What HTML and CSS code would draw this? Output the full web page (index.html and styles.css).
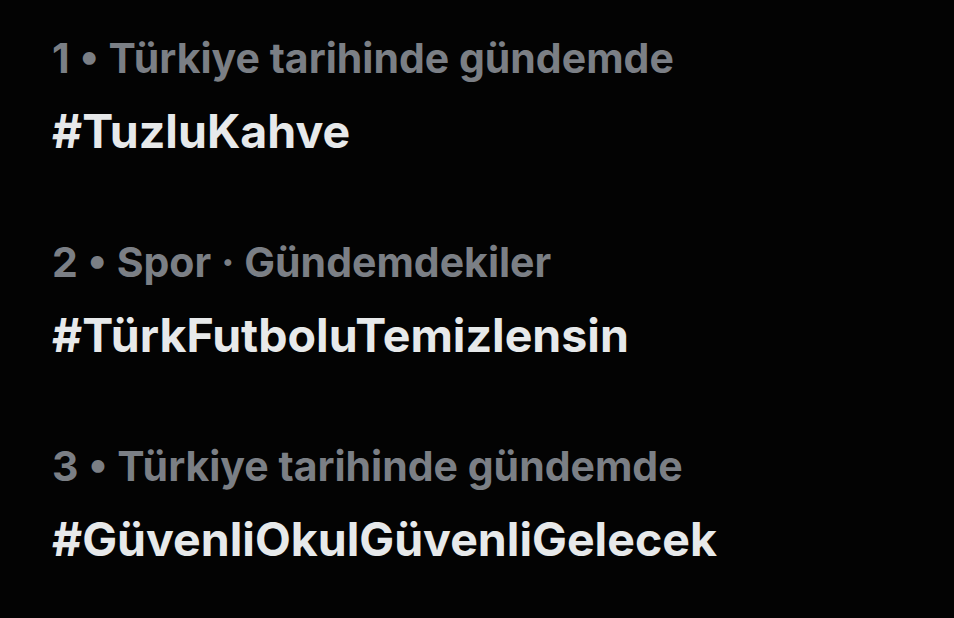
FILE: index.html
```html
<!DOCTYPE html>
<html lang="tr">
<head>
<meta charset="utf-8">
<link rel="stylesheet" href="styles.css">
</head>
<body>
<ul class="trends">
  <li class="trend">
    <div class="meta">1 • Türkiye tarihinde gündemde</div>
    <div class="tag">#TuzluKahve</div>
  </li>
  <li class="trend">
    <div class="meta">2 • Spor · Gündemdekiler</div>
    <div class="tag">#TürkFutboluTemizlensin</div>
  </li>
  <li class="trend">
    <div class="meta">3 • Türkiye tarihinde gündemde</div>
    <div class="tag">#GüvenliOkulGüvenliGelecek</div>
  </li>
</ul>
</body>
</html>
```
FILE: styles.css
```css
html, body {
  margin: 0;
  padding: 0;
  background: #030303;
  height: 100%;
}
.trends {
  list-style: none;
  margin: 0;
  padding: 30px 0 0 52px;
  display: flex;
  flex-direction: column;
  gap: 72px;
  font-family: Inter, "Noto Sans", sans-serif;
  font-weight: 700;
}
.trend {
  display: flex;
  flex-direction: column;
  gap: 14px;
}
.meta {
  color: #7b7f85;
  font-size: 41px;
  line-height: 56px;
}
.tag {
  color: #e7e9ea;
  font-size: 46.5px;
  line-height: 62px;
}
```
